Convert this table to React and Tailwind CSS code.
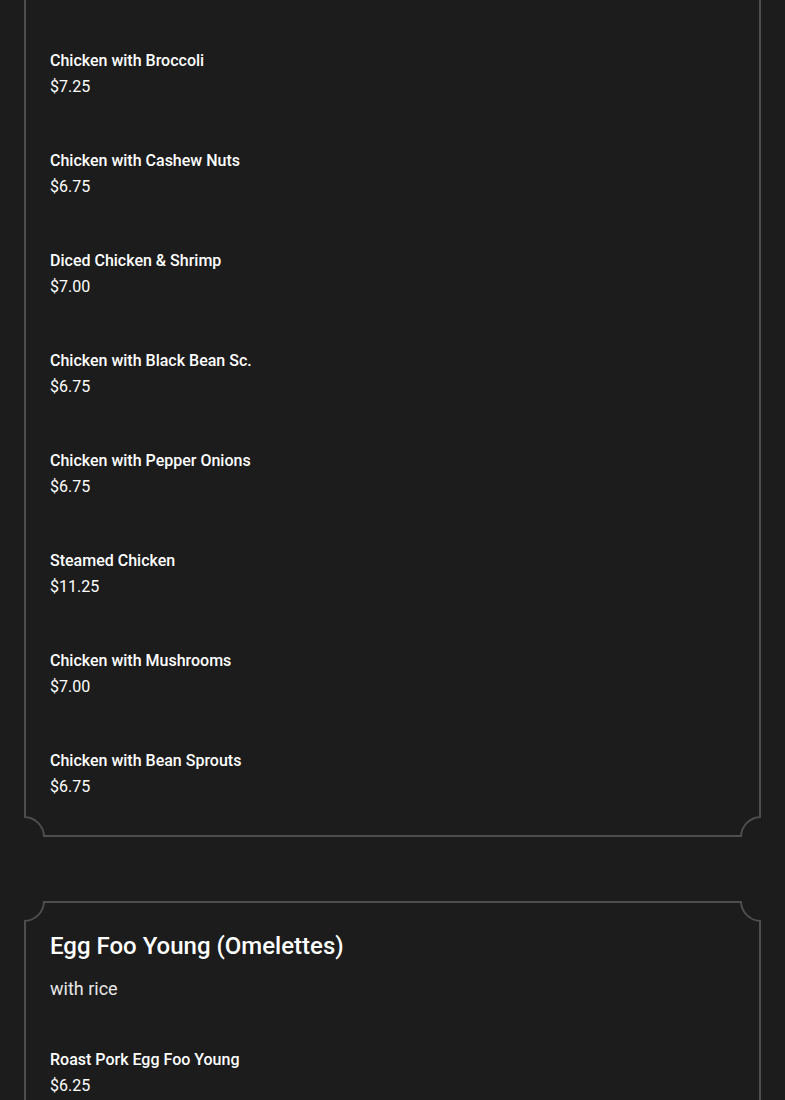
import React from "react";

const chicken = [
  ["Chicken with Broccoli", "$7.25"],
  ["Chicken with Cashew Nuts", "$6.75"],
  ["Diced Chicken & Shrimp", "$7.00"],
  ["Chicken with Black Bean Sc.", "$6.75"],
  ["Chicken with Pepper Onions", "$6.75"],
  ["Steamed Chicken", "$11.25"],
  ["Chicken with Mushrooms", "$7.00"],
  ["Chicken with Bean Sprouts", "$6.75"],
];

const eggFoo = [["Roast Pork Egg Foo Young", "$6.25"]];

function Corner({ pos }) {
  const box = {
    tl: "-top-[2px] -left-[2px]",
    tr: "-top-[2px] -right-[2px]",
    bl: "-bottom-[2px] -left-[2px]",
    br: "-bottom-[2px] -right-[2px]",
  }[pos];
  const circ = {
    tl: "-top-[21px] -left-[21px]",
    tr: "-top-[21px] -right-[21px]",
    bl: "-bottom-[21px] -left-[21px]",
    br: "-bottom-[21px] -right-[21px]",
  }[pos];
  return (
    <div className={`absolute ${box} w-[21px] h-[21px] overflow-hidden`}>
      <div
        className={`absolute ${circ} w-[42px] h-[42px] rounded-full border-2 border-[#4d4d4d] bg-[#1c1c1c]`}
      />
    </div>
  );
}

function Card({ className = "", children }) {
  return (
    <div className={`relative border-2 border-[#4d4d4d] ${className}`}>
      <Corner pos="tl" />
      <Corner pos="tr" />
      <Corner pos="bl" />
      <Corner pos="br" />
      <div className="relative">{children}</div>
    </div>
  );
}

function Item({ name, price }) {
  return (
    <div className="flex flex-col">
      <div className="text-[16px] leading-[26px] font-medium text-white">{name}</div>
      <div className="text-[16px] leading-[26px] text-white">{price}</div>
    </div>
  );
}

export default function App() {
  return (
    <div
      className="h-[1100px] bg-[#1c1c1c] px-[24px] overflow-hidden"
      style={{ fontFamily: "Roboto, 'Noto Sans', sans-serif" }}
    >
      <Card className="-mt-[40px] pt-[86px] pb-[35px] px-[24px]">
        <div className="flex flex-col gap-[48px]">
          {chicken.map(([n, p]) => (
            <Item key={n} name={n} price={p} />
          ))}
        </div>
      </Card>
      <Card className="mt-[64px] pt-[27px] pb-[60px] px-[24px]">
        <h2 className="text-[24px] leading-[32px] font-medium text-white">
          Egg Foo Young (Omelettes)
        </h2>
        <p className="mt-[13px] text-[18px] leading-[28px] text-[#e8e8e8]">with rice</p>
        <div className="mt-[44px] flex flex-col gap-[48px]">
          {eggFoo.map(([n, p]) => (
            <Item key={n} name={n} price={p} />
          ))}
        </div>
      </Card>
    </div>
  );
}
